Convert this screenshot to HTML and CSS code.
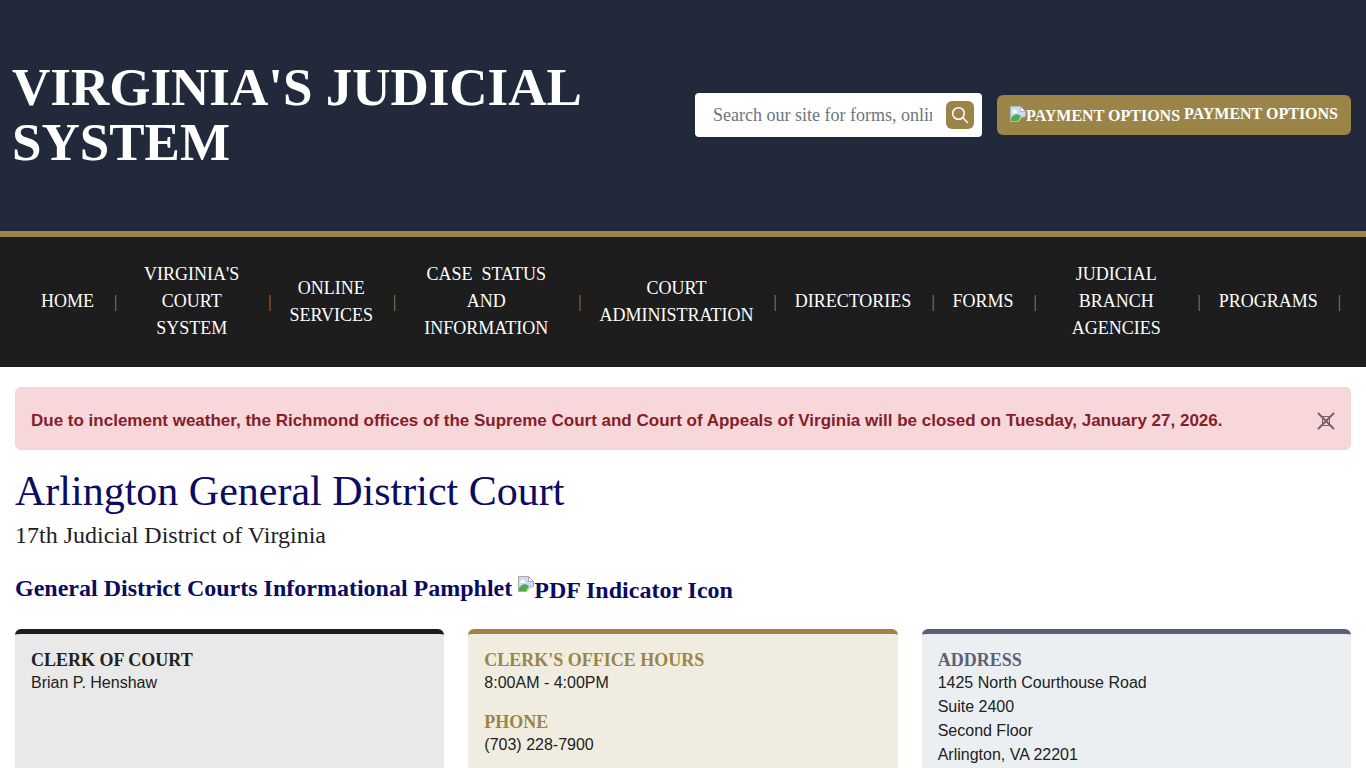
FILE: index.html
```html
<!DOCTYPE html>
<html lang="en">
<head>
    <meta charset="UTF-8">
    <meta name="viewport" content="width=device-width, initial-scale=1.0">
    <title>Arlington General District Court</title>
    <link rel="stylesheet" href="styles.css">
</head>
<body>
    <header class="site-header">
        <a class="site-title" href="#">Virginia's Judicial System</a>
        <div class="header-tools">
            <form class="search">
                <input type="text" name="q" aria-label="Search our site" placeholder="Search our site for forms, online services">
                <button type="button" aria-label="Search">
                    <svg width="18" height="18" viewBox="0 0 18 18" fill="none" stroke="#fff" stroke-width="1.5" stroke-linecap="round">
                        <circle cx="7.5" cy="7.5" r="5.8"/>
                        <path d="M11.8 11.8L16.5 16.5"/>
                    </svg>
                </button>
            </form>
            <a class="payment" href="#">
                <span class="missing">
                    <svg width="16" height="16" viewBox="0 0 16 16">
                        <path d="M.5 .5h10l5 5v5l-4 1-3 4h-8z" fill="#c9dbf8" stroke="#b5b5b5"/>
                        <path d="M3 5c0-2 3-2 3 0 2 0 2 2 0 2H3C1 7 2 5 3 5z" fill="#fff"/>
                        <path d="M1 15v-3c3-4 6-5 10-2l-3 5z" fill="#4fae45"/>
                        <path d="M10.5 .5v5h5z" fill="#fff" stroke="#b5b5b5"/>
                    </svg>Payment Options</span>
                <span>Payment Options</span>
            </a>
        </div>
    </header>

    <nav class="main-nav">
        <ul>
            <li><a href="#">Home</a></li>
            <li><a href="#">Virginia's Court System</a></li>
            <li><a href="#">Online Services</a></li>
            <li><a href="#">Case &nbsp;Status and Information</a></li>
            <li><a href="#">Court Administration</a></li>
            <li><a href="#">Directories</a></li>
            <li><a href="#">Forms</a></li>
            <li><a href="#">Judicial Branch Agencies</a></li>
            <li><a href="#">Programs</a></li>
        </ul>
    </nav>

    <main>
        <div class="alert" role="alert">
            <strong>Due to inclement weather, the Richmond offices of the Supreme Court and Court of Appeals of Virginia will be closed on Tuesday, January 27, 2026.</strong>
            <button type="button" class="close" aria-label="Close">
                <svg width="18" height="18" viewBox="0 0 18 18" fill="none" stroke="#776265">
                    <path d="M1.5 1.5L16.5 16.5M16.5 1.5L1.5 16.5" stroke-width="2" stroke-linecap="round"/>
                    <path d="M4 4.5h10M5.5 4.5v9M12.5 4.5v9M4 13.5h10"/>
                </svg>
            </button>
        </div>

        <h1>Arlington General District Court</h1>
        <p class="district">17th Judicial District of Virginia</p>

        <p class="pamphlet">
            <a href="#">General District Courts Informational Pamphlet
                <span class="missing">
                    <svg width="16" height="16" viewBox="0 0 16 16">
                        <path d="M.5 .5h10l5 5v5l-4 1-3 4h-8z" fill="#c9dbf8" stroke="#a8a8a8"/>
                        <path d="M3 5c0-2 3-2 3 0 2 0 2 2 0 2H3C1 7 2 5 3 5z" fill="#fff"/>
                        <path d="M1 15v-3c3-4 6-5 10-2l-3 5z" fill="#4fae45"/>
                        <path d="M10.5 .5v5h5z" fill="#fff" stroke="#a8a8a8"/>
                    </svg>PDF Indicator Icon</span></a>
        </p>

        <div class="cards">
            <section class="card card-dark">
                <h2>Clerk of Court</h2>
                <p>Brian P. Henshaw</p>
            </section>
            <section class="card card-gold">
                <h2>Clerk's Office Hours</h2>
                <p>8:00AM - 4:00PM</p>
                <h2>Phone</h2>
                <p>(703) 228-7900</p>
            </section>
            <section class="card card-blue">
                <h2>Address</h2>
                <p>1425 North Courthouse Road<br>
                Suite 2400<br>
                Second Floor<br>
                Arlington, VA 22201</p>
            </section>
        </div>
    </main>
</body>
</html>
```

FILE: styles.css
```css
* {
    box-sizing: border-box;
}

body {
    margin: 0;
    background-color: #fff;
    color: #212121;
    font-family: "Liberation Sans", Arial, sans-serif;
    font-size: 16px;
    line-height: 24px;
}

a {
    text-decoration: none;
}

/* header */
.site-header {
    display: flex;
    align-items: center;
    justify-content: space-between;
    padding: 60px 15px 61px 12px;
    background-color: #22293b;
    border-bottom: 6px solid #9b8447;
    font-family: "Liberation Serif", "Times New Roman", serif;
}

.site-title {
    flex: 0 1 620px;
    color: #fff;
    font-size: 53px;
    font-weight: bold;
    line-height: 55px;
    text-transform: uppercase;
}

.header-tools {
    display: flex;
    align-items: center;
    gap: 15px;
}

.search {
    display: flex;
    align-items: center;
    gap: 14px;
    width: 287px;
    height: 44px;
    padding: 0 8px 0 18px;
    background-color: #fff;
    border-radius: 4px;
}

.search input {
    flex: 1;
    min-width: 0;
    padding: 0;
    border: none;
    outline: none;
    background: none;
    font-family: inherit;
    font-size: 18px;
}

.search input::placeholder {
    color: #6c757d;
}

.search button {
    display: flex;
    align-items: center;
    justify-content: center;
    width: 28px;
    height: 28px;
    padding: 0;
    border: none;
    border-radius: 6px;
    background-color: #9b8447;
}

.payment {
    padding: 7px 13px;
    border-radius: 6px;
    background-color: #9b8447;
    color: #fff;
    font-size: 16px;
    font-weight: bold;
    text-transform: uppercase;
    white-space: nowrap;
}

.missing {
    display: inline-block;
    vertical-align: middle;
}

.missing svg {
    vertical-align: -1px;
}

.pamphlet .missing svg {
    vertical-align: 6px;
}

/* navigation */
.main-nav {
    padding: 24px 15px 25px;
    background-color: #1d1d1d;
    font-family: "Liberation Serif", "Times New Roman", serif;
    font-size: 18px;
    line-height: 27px;
}

.main-nav ul {
    display: flex;
    align-items: center;
    margin: 0;
    padding: 0 10px 0 8px;
    list-style: none;
}

.main-nav li {
    display: flex;
    align-items: center;
}

.main-nav li::after {
    content: "|";
    color: #9b8f47;
    font-size: 16px;
}

.main-nav a {
    padding: 0 20px 0 18px;
    color: #fff;
    text-align: center;
    text-transform: uppercase;
}

/* content */
main {
    padding: 20px 15px;
}

.alert {
    display: flex;
    align-items: center;
    justify-content: space-between;
    padding: 21px 15px 16px;
    border: 1px solid #f5d3d6;
    border-radius: 6px;
    background-color: #f8d7da;
    color: #842029;
    font-size: 17px;
}

.close {
    display: flex;
    padding: 0;
    border: none;
    background: none;
}

h1 {
    margin: 16px 0 0;
    color: #0b0b61;
    font-family: "Liberation Serif", "Times New Roman", serif;
    font-size: 42px;
    font-weight: normal;
    line-height: 50px;
}

.district {
    margin: 1px 0 0;
    font-family: "Liberation Serif", "Times New Roman", serif;
    font-size: 24px;
    line-height: 36px;
}

.pamphlet {
    margin: 17px 0 21px;
    font-family: "Liberation Serif", "Times New Roman", serif;
    font-size: 24px;
    font-weight: bold;
    line-height: 36px;
}

.pamphlet a {
    color: #0b0b61;
}

.cards {
    display: grid;
    grid-template-columns: repeat(3, 1fr);
    gap: 24px;
}

.card {
    min-height: 220px;
    padding: 15px 16px;
    border-top: 5px solid;
    border-radius: 6px;
}

.card h2 {
    margin: 0;
    font-family: "Liberation Serif", "Times New Roman", serif;
    font-size: 18px;
    line-height: 22px;
    text-transform: uppercase;
}

.card p {
    margin: 0 0 16px;
}

.card-dark {
    border-color: #1d1d1d;
    background-color: #e9e9e9;
}

.card-gold {
    border-color: #9b8447;
    background-color: #f0ede0;
}

.card-gold h2 {
    color: #9b8447;
}

.card-blue {
    border-color: #5d5f7a;
    background-color: #eceff2;
}

.card-blue h2 {
    color: #5d5f7a;
}
```
